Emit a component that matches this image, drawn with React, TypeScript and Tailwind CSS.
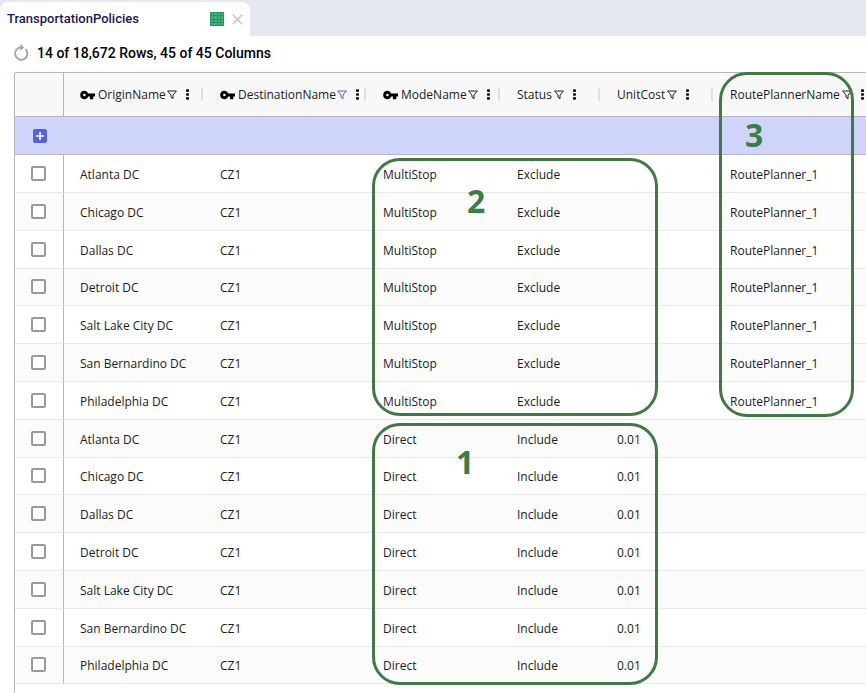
import React from 'react';

interface Column {
    key: keyof Policy;
    width: string;
    isKey?: boolean;
    filtered?: boolean;
}

interface Policy {
    OriginName: string;
    DestinationName: string;
    ModeName: string;
    Status: string;
    UnitCost: string;
    RoutePlannerName: string;
}

const columns: Column[] = [
    { key: 'OriginName', width: 'w-[140px]', isKey: true },
    { key: 'DestinationName', width: 'w-[163px]', isKey: true, filtered: true },
    { key: 'ModeName', width: 'w-[134px]', isKey: true },
    { key: 'Status', width: 'w-[100px]' },
    { key: 'UnitCost', width: 'w-[113px]' },
    { key: 'RoutePlannerName', width: 'w-[160px]' },
];

const origins = [
    'Atlanta DC',
    'Chicago DC',
    'Dallas DC',
    'Detroit DC',
    'Salt Lake City DC',
    'San Bernardino DC',
    'Philadelphia DC',
];

const policies: Policy[] = [
    ...origins.map((origin) => ({
        OriginName: origin,
        DestinationName: 'CZ1',
        ModeName: 'MultiStop',
        Status: 'Exclude',
        UnitCost: '',
        RoutePlannerName: 'RoutePlanner_1',
    })),
    ...origins.map((origin) => ({
        OriginName: origin,
        DestinationName: 'CZ1',
        ModeName: 'Direct',
        Status: 'Include',
        UnitCost: '0.01',
        RoutePlannerName: '',
    })),
];

const KeyIcon = () => (
    <svg className="w-[15px] h-[10px] shrink-0" viewBox="0 0 15 10" fill="#000000" aria-hidden="true">
        <path
            fillRule="evenodd"
            d="M4.4 0.8a4.2 4.2 0 1 0 3.9 5.8h1.6v2.6h3.4V6.6H15V3.4H8.3a4.2 4.2 0 0 0-3.9-2.6zm0 2.9a1.3 1.3 0 1 1 0 2.6 1.3 1.3 0 0 1 0-2.6z"
        />
    </svg>
);

const FilterIcon = () => (
    <svg className="w-[10px] h-[10px]" viewBox="0 0 10 10" fill="none" stroke="currentColor" strokeWidth="1" aria-hidden="true">
        <path d="M0.6 1h8.8L6 5v3.8L4 7.2V5z" strokeLinejoin="round" />
    </svg>
);

const MenuIcon = () => (
    <svg className="w-[3px] h-[11px]" viewBox="0 0 3 11" fill="currentColor" aria-hidden="true">
        <rect x="0" y="0.3" width="3" height="2.6" rx="0.8" />
        <rect x="0" y="4.2" width="3" height="2.6" rx="0.8" />
        <rect x="0" y="8.1" width="3" height="2.6" rx="0.8" />
    </svg>
);

const SheetIcon = () => (
    <svg className="w-[14px] h-[14px]" viewBox="0 0 14 14" aria-hidden="true">
        <rect width="14" height="14" fill="#1f9a5b" />
        <path
            d="M1 1h2v2H1zM4 1h3v2H4zM8 1h2v2H8zM11 1h2v2h-2zM1 4h2v3H1zM4 4h3v3H4zM8 4h2v3H8zM11 4h2v3h-2zM1 8h2v2H1zM4 8h3v2H4zM8 8h2v2H8zM11 8h2v2h-2zM1 11h2v2H1zM4 11h3v2H4zM8 11h2v2H8zM11 11h2v2h-2z"
            fill="#45b079"
        />
    </svg>
);

const RefreshIcon = () => (
    <svg className="w-[16px] h-[18px]" viewBox="0 0 16 18" fill="none" stroke="#a3a3b8" strokeWidth="1.9" aria-hidden="true">
        <path d="M12.6 5.2A6.2 6.2 0 1 1 8 3.4" />
        <path d="M7.2 0v6.8l4-3.4z" fill="#a3a3b8" stroke="none" />
    </svg>
);

const TabBar = () => (
    <div className="flex h-9 items-end bg-[#e5e8f1]">
        <div className="flex h-[34px] w-[250px] items-center rounded-t-lg bg-white px-[7px] text-[#1b1655]">
            <span className="text-[13px] font-medium">TransportationPolicies</span>
            <span className="ml-auto">
                <SheetIcon />
            </span>
            <button className="ml-2 text-[#c0c0cc]" aria-label="Close tab">
                <svg className="w-[11px] h-[11px]" viewBox="0 0 11 11" stroke="currentColor" strokeWidth="1.4" aria-hidden="true">
                    <path d="M0.8 0.8l9.4 9.4M10.2 0.8l-9.4 9.4" />
                </svg>
            </button>
        </div>
    </div>
);

const HeaderCell: React.FC<{ column: Column }> = ({ column }) => (
    <th className="h-11 border-b border-[#b5b5c3] bg-[#f8f8f8] p-0 pl-4 text-left font-normal">
        <div className="flex items-center">
            {column.isKey && <KeyIcon />}
            <span className={column.isKey ? 'ml-[3px] mr-px' : 'mr-[2px]'}>{column.key}</span>
            <button
                className={column.filtered ? 'text-[#5a5fd8]' : 'text-[#222222]'}
                aria-label={`Filter ${column.key}`}
            >
                <FilterIcon />
            </button>
            <button className="ml-[9px] text-[#111111]" aria-label={`${column.key} menu`}>
                <MenuIcon />
            </button>
            <span className="ml-auto mr-px h-[13px] w-[2px] bg-[#dedfe3]" />
        </div>
    </th>
);

const PolicyRow: React.FC<{ policy: Policy }> = ({ policy }) => (
    <tr className="h-[38px] even:bg-white odd:bg-[#fbfbfb] [&:nth-child(5n)]:h-[37px]">
        <td className="border-b border-r border-b-[#e8e8ec] border-r-[#b5b5c3] p-0">
            <input
                type="checkbox"
                aria-label={`Select ${policy.OriginName}`}
                className="ml-4 mb-px block h-[15px] w-[15px] appearance-none rounded-[2px] border-2 border-[#9a9a9a] bg-white"
            />
        </td>
        {columns.map((column) => (
            <td key={column.key} className="border-b border-[#e8e8ec] p-0 pt-[2px] pl-4">
                {policy[column.key]}
            </td>
        ))}
    </tr>
);

const App = () => (
    <div className="relative min-h-screen overflow-hidden bg-white font-['Roboto',sans-serif]">
        <TabBar />

        <div className="flex h-[34px] items-center gap-2 pl-[13px]">
            <button aria-label="Refresh rows">
                <RefreshIcon />
            </button>
            <h1 className="text-[14px] font-medium text-black">14 of 18,672 Rows, 45 of 45 Columns</h1>
        </div>

        <div className="mt-[2px] ml-[14px] min-h-[calc(100vh-72px)] overflow-hidden rounded-tl-[3px] border-l border-t border-[#b5b5c3]">
            <table className="w-[859px] table-fixed border-separate border-spacing-0 font-['Open_Sans',sans-serif] text-[12px] leading-5 text-[#1c1c1c]">
                <colgroup>
                    <col className="w-[49px]" />
                    {columns.map((column) => (
                        <col key={column.key} className={column.width} />
                    ))}
                </colgroup>
                <thead>
                    <tr>
                        <th className="border-b border-r border-[#b5b5c3] bg-[#f8f8f8] p-0" aria-label="Selection" />
                        {columns.map((column) => (
                            <HeaderCell key={column.key} column={column} />
                        ))}
                    </tr>
                </thead>
                <tbody>
                    <tr className="h-[38px] bg-[#cfd4fa]">
                        <td className="border-b border-[#b5b5c3] p-0" colSpan={7}>
                            <button
                                className="ml-[18px] flex h-[14px] w-[14px] items-center justify-center rounded-[2px] bg-[#5862dc]"
                                aria-label="Add row"
                            >
                                <svg className="w-2 h-2" viewBox="0 0 8 8" stroke="white" strokeWidth="1.6" aria-hidden="true">
                                    <path d="M4 0v8M0 4h8" />
                                </svg>
                            </button>
                        </td>
                    </tr>
                    {policies.map((policy) => (
                        <PolicyRow key={`${policy.ModeName}-${policy.OriginName}`} policy={policy} />
                    ))}
                </tbody>
            </table>
        </div>

        {/* Callouts over the grid */}
        <div className="pointer-events-none font-['Open_Sans',sans-serif] text-[32px] leading-8 font-bold text-[#3c7d43]">
            <div className="absolute left-[372px] top-[158px] h-[258px] w-[286px] rounded-[28px] border-3 border-[#417845]">
                <span className="absolute left-[92px] top-[24px]">2</span>
            </div>
            <div className="absolute left-[372px] top-[423px] h-[262px] w-[286px] rounded-[28px] border-3 border-[#417845]">
                <span className="absolute left-[81px] top-[20px]">1</span>
            </div>
            <div className="absolute left-[719px] top-[72px] h-[345px] w-[135px] rounded-[28px] border-3 border-[#417845]">
                <span className="absolute left-[23px] top-[44px]">3</span>
            </div>
        </div>
    </div>
);

export default App;
